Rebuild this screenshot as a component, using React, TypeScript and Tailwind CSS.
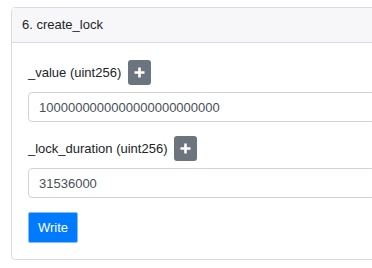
const Field = ({ label, value }: { label: string; value: string }) => (
  <div className="flex flex-col">
    <div className="flex flex-row items-center gap-[7px]">
      <span>{label}</span>
      <button className="w-[23px] h-[25px] rounded-[3px] bg-[#6c757d] text-white flex items-center justify-center">
        <svg width="11" height="11" viewBox="0 0 11 11">
          <path d="M5.5 0.5v10M0.5 5.5h10" stroke="white" strokeWidth="2.6" />
        </svg>
      </button>
    </div>
    <input
      readOnly
      value={value}
      className="mt-[7px] h-[30px] w-full border border-[#ced4da] rounded-[4px] px-[10px] text-[#495057] outline-none"
    />
  </div>
);

const App = () => {
  return (
    <div
      className="w-[372px] h-[268px] overflow-hidden bg-white text-[13px] text-[#212529]"
      style={{ fontFamily: '"Liberation Sans", Arial, sans-serif' }}
    >
      <div className="ml-[11px] mt-[7px] w-[420px] border border-[#dcdcdc] rounded-[4px]">
        <div className="h-[35px] flex items-center px-[10px] bg-[#f7f7f9] border-b border-[#dcdcdc]">
          6. create_lock
        </div>
        <div className="pl-[16px] pt-[17px] pb-[16px] flex flex-col">
          <Field label="_value (uint256)" value="1000000000000000000000000" />
          <div className="mt-[14px]">
            <Field label="_lock_duration (uint256)" value="31536000" />
          </div>
          <button className="mt-[14px] self-start w-[50px] h-[31px] bg-[#007bff] text-white rounded-[2px] border border-[#80bdff]">
            Write
          </button>
        </div>
      </div>
    </div>
  );
};

export default App;
